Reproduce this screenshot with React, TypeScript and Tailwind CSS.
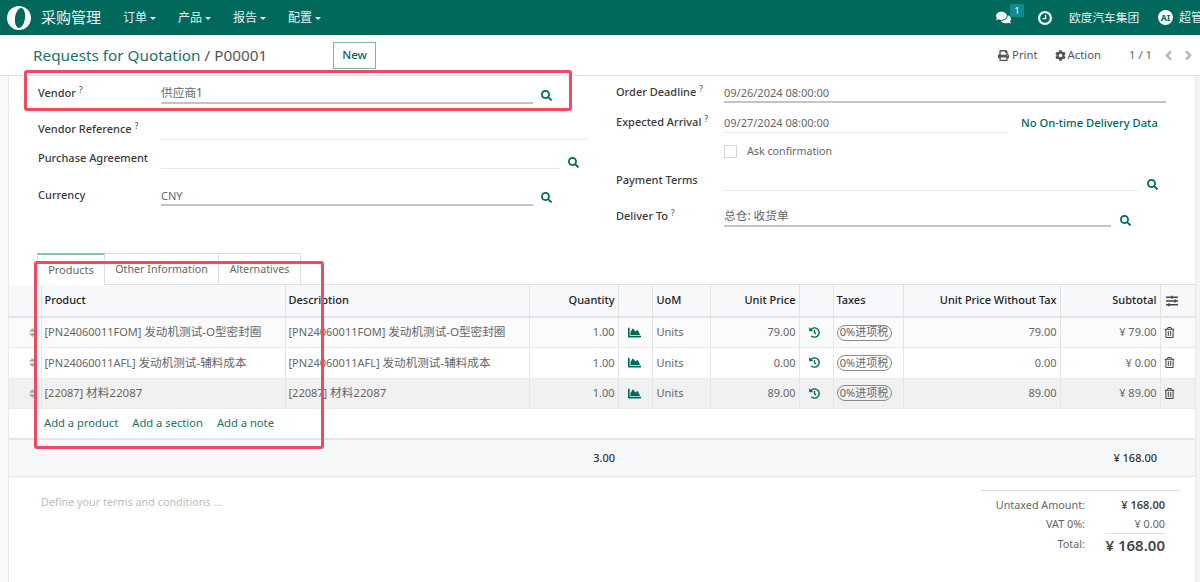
import React from "react";
import { FaAngleLeft, FaAngleRight, FaChartArea, FaCog, FaComments, FaHistory, FaPrint, FaRegTrashAlt, FaSearch, FaSlidersH, FaSort } from "react-icons/fa";

const font = "font-['Noto_Sans','Noto_Sans_CJK_SC',sans-serif]";

function Menu({ label }: { label: string }) {
  return (
    <div className="flex items-center gap-[3px] text-[12px] text-[#e6f0ee]">
      <span>{label}</span>
      <span className="mt-[1px] border-x-[3px] border-t-[3px] border-x-transparent border-t-[#e6f0ee]" />
    </div>
  );
}

function Label({ text, help, w, right }: { text: string; help?: boolean; w: string; right?: boolean }) {
  return (
    <div className={`${w} shrink-0 text-[11px] font-medium text-[#3a3a3a] ${right ? "pt-[1px]" : ""}`}>
      {text}
      {help && <sup className="ml-[3px] text-[8px] text-[#555]">?</sup>}
    </div>
  );
}

function Field({ children, w, strong, cjk }: { children?: React.ReactNode; w: string; strong?: boolean; cjk?: boolean }) {
  return (
    <div className={`${w} flex h-[22px] shrink-0 items-center border-b text-[#666] ${cjk ? "pt-[2px] text-[11.7px]" : "pt-[4px] text-[11px]"} ${strong ? "border-b-2 border-b-[#c4c4c4]" : "border-b-[#e8e8e8]"}`}>
      {children}
    </div>
  );
}

const Search = ({ className }: { className: string }) => <FaSearch className={`text-[11px] text-[#00695c] ${className}`} />;

const headCell = "border-r border-[#dfe2e6] px-[3px] text-[11px] font-medium text-[#222]";
const cell = "border-r border-[#e4e6e9] px-[3px] text-[11px] text-[#666]";

const rows = [
  { code: "[PN24060011FOM]", name: "发动机测试-O型密封圈", price: "79.00", sub: "¥ 79.00", bg: "bg-[#fbfbfb]" },
  { code: "[PN24060011AFL]", name: "发动机测试-辅料成本", price: "0.00", sub: "¥ 0.00", bg: "bg-white" },
  { code: "[22087]", name: "材料22087", price: "89.00", sub: "¥ 89.00", bg: "bg-[#f1f1f1]" },
];

export default function App() {
  return (
    <div className={`${font} relative h-[582px] w-[1200px] overflow-hidden bg-white`}>
      <header className="flex h-[35px] items-center justify-between bg-[#00695c] pl-[7px] text-white">
        <div className="flex items-center">
          <svg width="24" height="24" viewBox="0 0 24 24" className="shrink-0">
            <circle cx="12" cy="12" r="12" fill="#fff" />
            <ellipse cx="13" cy="12" rx="5" ry="10" fill="#00695c" transform="rotate(8 13 12)" />
          </svg>
          <span className="ml-[10px] w-[82px] whitespace-nowrap text-[15px] text-[#eef5f4]">采购管理</span>
          <div className="flex gap-[22px]">
            <Menu label="订单" />
            <Menu label="产品" />
            <Menu label="报告" />
            <Menu label="配置" />
          </div>
        </div>
        <div className="flex items-center">
          <div className="relative">
            <FaComments className="text-[15px] text-[#f2f7f6]" />
            <span className="absolute -top-[6px] left-[14px] flex h-[13px] w-[14px] items-center justify-center bg-[#0f8a8f] text-[9px]">1</span>
          </div>
          <svg width="14" height="14" viewBox="0 0 14 14" className="ml-[27px] shrink-0" fill="none" stroke="#f2f7f6">
            <circle cx="7" cy="7" r="5.9" strokeWidth="2.2" />
            <path d="M7.6 3.8V7.6H4.6" strokeWidth="1.4" />
          </svg>
          <span className="ml-[17px] w-[70px] whitespace-nowrap text-[11.7px] text-[#e6f0ee]">欧度汽车集团</span>
          <span className="ml-[19px] flex h-[15px] w-[15px] items-center justify-center rounded-full bg-white text-[9px] font-bold text-[#00695c]">AI</span>
          <span className="ml-[6px] w-[21px] overflow-hidden whitespace-nowrap text-[12px] text-[#e6f0ee]">超管</span>
        </div>
      </header>

      <div className="flex h-[41px] items-center border-b border-[#e2e2e2] pl-[33px] pr-[4px]">
        <div className="w-[300px] whitespace-nowrap text-[15.3px] text-[#1b7268]">
          Requests for Quotation <span className="text-[#555]">/ P00001</span>
        </div>
        <button className="h-[27px] w-[43px] border border-[#7fb3ad] text-[11.5px] font-medium text-[#00695c]">New</button>
        <div className="ml-auto flex items-center text-[11.3px] text-[#555]">
          <FaPrint className="mr-[3px] text-[11px]" />
          <span>Print</span>
          <FaCog className="ml-[17px] mr-[2px] text-[11px]" />
          <span>Action</span>
          <span className="ml-[28px] text-[#666]">1 / 1</span>
          <FaAngleLeft className="ml-[9px] text-[15px] text-[#b5b5b5]" />
          <FaAngleRight className="ml-[5px] text-[15px] text-[#b5b5b5]" />
        </div>
      </div>

      <div className="flex h-[506px]">
        <div className="w-[9px] shrink-0 border-r border-[#e8e8e8] bg-[#f9fafb]" />
        <main className="w-[1186px] shrink-0">
          <section className="flex h-[177px]">
            <div className="w-[578px] shrink-0 pl-[29px]">
              <div className="mt-[6px] flex h-[22px] items-center">
                <Label text="Vendor" help w="w-[123px]" />
                <Field w="w-[372px]" strong cjk>供应商1</Field>
                <Search className="ml-[8px] mt-[5px]" />
              </div>
              <div className="mt-[14px] flex h-[22px] items-center">
                <Label text="Vendor Reference" help w="w-[123px]" />
                <Field w="w-[426px]" />
              </div>
              <div className="mt-[7px] flex h-[22px] items-center">
                <Label text="Purchase Agreement" w="w-[123px]" />
                <Field w="w-[399px]" />
                <Search className="ml-[8px] mt-[8px]" />
              </div>
              <div className="mt-[15px] flex h-[22px] items-center">
                <Label text="Currency" w="w-[123px]" />
                <Field w="w-[372px]" strong>CNY</Field>
                <Search className="ml-[8px] mt-[5px]" />
              </div>
            </div>
            <div className="pl-[29px]">
              <div className="mt-[5px] flex h-[22px] items-center">
                <Label text="Order Deadline" help right w="w-[108px]" />
                <Field w="w-[442px]" strong>09/26/2024 08:00:00</Field>
              </div>
              <div className="mt-[8px] flex h-[22px] items-center">
                <Label text="Expected Arrival" help right w="w-[108px]" />
                <Field w="w-[284px]">09/27/2024 08:00:00</Field>
                <span className="ml-[13px] whitespace-nowrap pt-[2px] text-[11.2px] font-medium text-[#00695c]">No On-time Delivery Data</span>
              </div>
              <div className="mt-[8px] flex h-[20px] items-center pl-[108px]">
                <span className="h-[13px] w-[13px] border border-[#d5d5d5] bg-white" />
                <span className="ml-[10px] text-[10.7px] text-[#666]">Ask confirmation</span>
              </div>
              <div className="mt-[8px] flex h-[22px] items-center">
                <Label text="Payment Terms" right w="w-[108px]" />
                <Field w="w-[413px]" />
                <Search className="ml-[10px] mt-[8px]" />
              </div>
              <div className="mt-[14px] flex h-[22px] items-center">
                <Label text="Deliver To" help right w="w-[108px]" />
                <Field w="w-[387px]" strong cjk>总仓: 收货单</Field>
                <Search className="ml-[9px] mt-[8px]" />
              </div>
            </div>
          </section>

          <nav className="flex h-[32px] items-stretch pl-[28px] text-[10.7px] text-[#666]">
            <div className="flex w-[68px] items-center justify-center border-x border-t-2 border-x-[#dcdfe3] border-t-[#8fbdb7] bg-white pt-[1px] text-[11px]">Products</div>
            <div className="flex w-[114px] items-center justify-center border-b border-r border-t border-[#dcdfe3] pt-[1px]">Other Information</div>
            <div className="flex w-[82px] items-center justify-center border-b border-r border-t border-[#dcdfe3] pt-[1px]">Alternatives</div>
            <div className="grow border-b border-[#dcdfe3]" />
          </nav>

          <table className="w-[1186px] table-fixed border-collapse">
            <colgroup>
              <col className="w-[32px]" />
              <col className="w-[244px]" />
              <col className="w-[244px]" />
              <col className="w-[89px]" />
              <col className="w-[34px]" />
              <col className="w-[58px]" />
              <col className="w-[89px]" />
              <col className="w-[34px]" />
              <col className="w-[70px]" />
              <col className="w-[157px]" />
              <col className="w-[100px]" />
              <col className="w-[35px]" />
            </colgroup>
            <thead>
              <tr className="h-[32px] border-b-2 border-[#e3e5e8] bg-[#f6f8fa]">
                <th className={headCell} />
                <th className={`${headCell} text-left`}>Product</th>
                <th className={`${headCell} text-left`}>Description</th>
                <th className={`${headCell} text-right`}>Quantity</th>
                <th className={headCell} />
                <th className={`${headCell} text-left !pl-[4px]`}>UoM</th>
                <th className={`${headCell} text-right`}>Unit Price</th>
                <th className={headCell} />
                <th className={`${headCell} text-left`}>Taxes</th>
                <th className={`${headCell} text-right`}>Unit Price Without Tax</th>
                <th className={`${headCell} text-right`}>Subtotal</th>
                <th className="pl-[5px]"><FaSlidersH className="text-[12px] text-[#444]" /></th>
              </tr>
            </thead>
            <tbody>
              {rows.map((r) => (
                <tr key={r.code} className={`h-[30.5px] border-b border-[#e8e9eb] ${r.bg}`}>
                  <td className={`${cell} text-right`}><FaSort className="ml-auto text-[11px] text-[#a5a9ad]" /></td>
                  <td className={`${cell} whitespace-nowrap pb-[1px]`}>{r.code} <span className="text-[11.6px]">{r.name}</span></td>
                  <td className={`${cell} whitespace-nowrap pb-[1px]`}>{r.code} <span className="text-[11.6px]">{r.name}</span></td>
                  <td className={`${cell} text-right`}>1.00</td>
                  <td className={`${cell} pr-[4px]`}><FaChartArea className="mx-auto text-[13px] text-[#00695c]" /></td>
                  <td className={`${cell} !pl-[4px]`}>Units</td>
                  <td className={`${cell} text-right`}>{r.price}</td>
                  <td className={`${cell} !pr-[6px]`}><FaHistory className="mx-auto text-[11px] text-[#00695c]" /></td>
                  <td className={cell}>
                    <span className="flex h-[16px] w-[55px] items-center justify-center whitespace-nowrap rounded-full border border-[#8a8a8a] text-[11px] text-[#666]">0%进项税</span>
                  </td>
                  <td className={`${cell} text-right`}>{r.price}</td>
                  <td className={`${cell} text-right`}>{r.sub}</td>
                  <td className="pl-[3px]"><FaRegTrashAlt className="text-[11px] text-[#444]" /></td>
                </tr>
              ))}
            </tbody>
          </table>

          <div className="flex h-[29px] items-center gap-[14px] pl-[35px] text-[11.2px] text-[#1b7268]">
            <span>Add a product</span>
            <span>Add a section</span>
            <span>Add a note</span>
          </div>

          <div className="flex h-[39px] items-center border-y border-y-[#e3e5e8] border-t-2 bg-[#f6f8fa] text-[11px] font-medium text-[#333]">
            <span className="w-[606px] text-right">3.00</span>
            <span className="ml-auto pr-[38px]">¥ 168.00</span>
          </div>

          <div className="flex justify-between pl-[32px] pr-[15px]">
            <span className="mt-[17px] text-[10.8px] text-[#bdbdbd]">Define your terms and conditions ...</span>
            <div className="mt-[13px] w-[199px] border-t border-[#e2e2e2] pt-[4px] text-[10.8px] text-[#666]">
              <div className="flex h-[20px] items-center justify-end pr-[15px]">
                <span>Untaxed Amount:</span>
                <span className="w-[80px] text-right text-[11px] font-semibold text-[#444]">¥ 168.00</span>
              </div>
              <div className="flex h-[18px] items-center justify-end pr-[15px]">
                <span>VAT 0%:</span>
                <span className="w-[80px] text-right">¥ 0.00</span>
              </div>
              <div className="flex h-[23px] items-center justify-end pr-[15px]">
                <span>Total:</span>
                <span className="ml-[20px] w-[60px] whitespace-nowrap border-t border-[#e2e2e2] text-right text-[15px] font-semibold leading-[22px] text-[#444]">¥ 168.00</span>
              </div>
            </div>
          </div>
        </main>
        <div className="grow border-l border-[#e8e8e8] bg-[#f4f4f4]" />
      </div>

      <div className="pointer-events-none absolute left-[24px] top-[70px] h-[41px] w-[548px] rounded-[3px] border-[3px] border-[#f04a63]" />
      <div className="pointer-events-none absolute left-[34px] top-[261px] h-[188px] w-[290px] rounded-[3px] border-[3px] border-[#f04a63]" />
    </div>
  );
}
